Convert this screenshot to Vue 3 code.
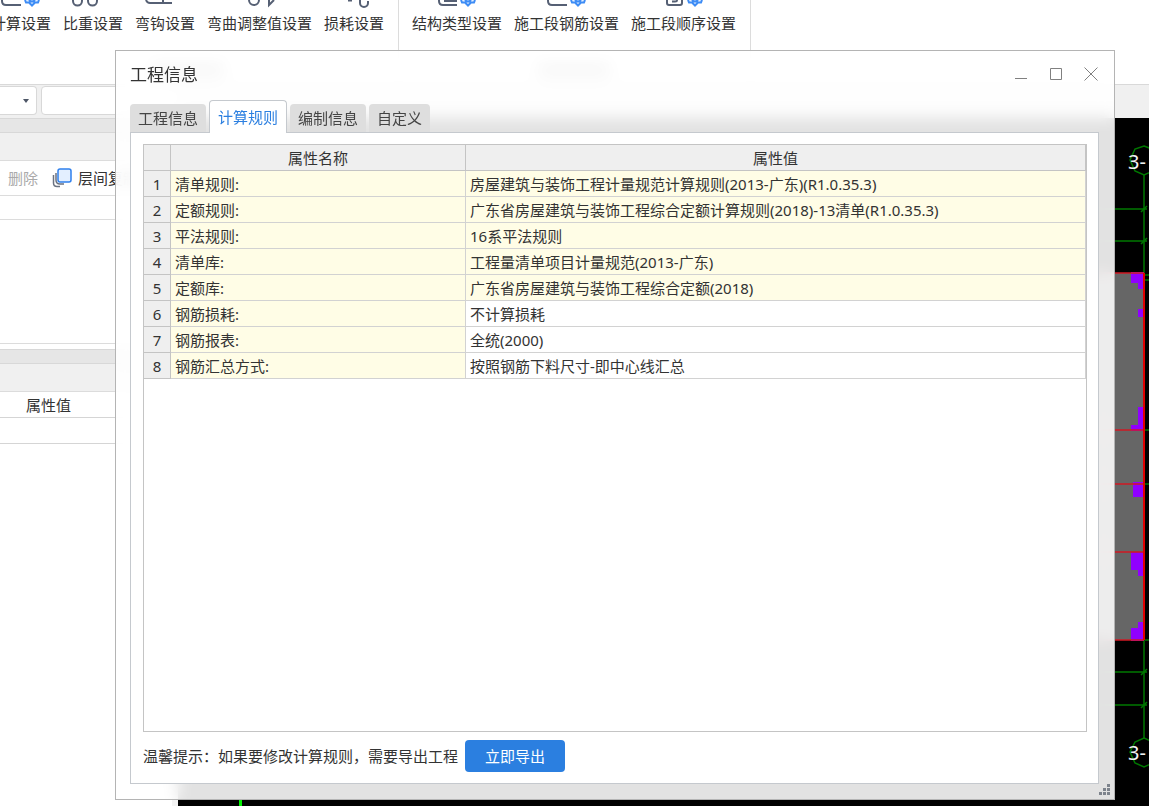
<script setup>
import { ref } from 'vue'

const ribbonGroups = [
  {
    cls: 'rebar',
    items: [
      { label: '计算设置', icon: 'calc' },
      { label: '比重设置', icon: 'weight' },
      { label: '弯钩设置', icon: 'hook' },
      { label: '弯曲调整值设置', icon: 'bend' },
      { label: '损耗设置', icon: 'loss' },
    ],
  },
  {
    cls: 'segment',
    items: [
      { label: '结构类型设置', icon: 'struct' },
      { label: '施工段钢筋设置', icon: 'calc' },
      { label: '施工段顺序设置', icon: 'order' },
    ],
  },
]

const tabs = ['工程信息', '计算规则', '编制信息', '自定义']
const active = ref(1)

const rows = [
  { name: '清单规则:', value: '房屋建筑与装饰工程计量规范计算规则(2013-广东)(R1.0.35.3)', locked: true },
  { name: '定额规则:', value: '广东省房屋建筑与装饰工程综合定额计算规则(2018)-13清单(R1.0.35.3)', locked: true },
  { name: '平法规则:', value: '16系平法规则', locked: true },
  { name: '清单库:', value: '工程量清单项目计量规范(2013-广东)', locked: true },
  { name: '定额库:', value: '广东省房屋建筑与装饰工程综合定额(2018)', locked: true },
  { name: '钢筋损耗:', value: '不计算损耗', locked: false },
  { name: '钢筋报表:', value: '全统(2000)', locked: false },
  { name: '钢筋汇总方式:', value: '按照钢筋下料尺寸-即中心线汇总', locked: false },
]
</script>

<template>
  <div class="app">
    <header class="ribbon">
      <section v-for="g in ribbonGroups" :key="g.cls" class="group" :class="g.cls">
        <div class="tools">
          <button v-for="t in g.items" :key="t.label" type="button" class="tool">
            <svg class="tool-icon" viewBox="0 0 40 10" fill="none" stroke="#566074" stroke-width="2">
              <path v-if="t.icon === 'calc'" d="M1 0V1Q1 5 5 5H20" />
              <path v-else-if="t.icon === 'weight'" d="M0 0V1a4.500 4.500 0 0 0 9 0V0M15 0V1a4.500 4.500 0 0 0 9 0V0" />
              <path v-else-if="t.icon === 'hook'" d="M1 0Q2 3 5 3H27M18 0V3" />
              <path v-else-if="t.icon === 'bend'" d="M9 0a5 5 0 0 0 10 0M29 0V5L34 0" />
              <path v-else-if="t.icon === 'loss'" d="M14 0.500H18M26 0V3a4 4 0 0 0 8 0V1" />
              <path v-else-if="t.icon === 'struct'" d="M2 0V1Q2 5 6 5H20M7 1H20" />
              <path v-else d="M3 0V3Q3 5 5 5H16Q18 5 18 3V0M8 1.500H11Q13 1.500 13 0" />
              <path
                v-if="['calc', 'struct', 'order'].includes(t.icon)"
                d="M24 0L25 2.500H28L31 5.500L34 2.500H37L38 0M28 0Q31 3 34 0"
                stroke="#3d8cf5"
                fill="#e3efff"
              />
            </svg>
            <span>{{ t.label }}</span>
          </button>
        </div>
        <i class="caption-shade"></i>
      </section>
    </header>

    <div class="selectors">
      <button type="button" class="combo" aria-label="楼层"><i class="caret"></i></button>
      <input class="combo-wide" aria-label="构件" />
    </div>

    <div class="work">
      <aside class="side">
        <div class="splitter first"></div>
        <div class="side-title"></div>
        <div class="side-tools">
          <button type="button" class="side-btn disabled">删除</button>
          <button type="button" class="side-btn">
            <svg viewBox="0 0 20 20" width="20" height="20" fill="none">
              <path d="M1.500 7V15Q1.500 18.500 5 18.500H8M4 5V12Q4 16 8 16H12" stroke="#6b7280" stroke-width="1.500" />
              <rect x="6" y="1" width="13" height="13" rx="2" fill="#e3efff" stroke="#2f80ed" stroke-width="1.500" />
            </svg>
            <span>层间复制</span>
          </button>
        </div>
        <div class="side-search"></div>
        <div class="side-list"></div>
        <div class="splitter"></div>
        <div class="side-title"></div>
        <div class="side-head">属性值</div>
        <div class="side-cell"></div>
      </aside>

      <main class="canvas">
        <svg class="drawing" width="100" height="689" viewBox="0 0 100 689" fill="none">
          <rect x="0" y="155" width="95" height="367" fill="#666" />
          <g stroke="#007800" stroke-width="1.500">
            <path d="M0 91H98M0 123H98M0 554H98M0 587H98M95 57V155M95 522V620M96 157H100M96 162H100M96 312H100M96 366H100M96 522H100" />
            <path d="M92 94L98 88M92 126L98 120M92 557L98 551M92 590L98 584" />
            <path d="M95 28L103 31L109 42L104 53L95 57L86 53L81 42L86 31ZM95 620L104 624L109 634L104 645L95 649L86 645L81 634L86 624Z" />
          </g>
          <path
            d="M82 154H95V171H89V165H82ZM89 191H95V199H89ZM89 289H95V313H82V307H89ZM84 364H95V379H84ZM82 434H95V458H89V452H82ZM82 510H89V504H95V523H82Z"
            fill="#9000ff"
          />
          <path d="M0 155H95M0 312H95M0 366H95M0 434H95M0 522H95" stroke="#d01823" stroke-width="1.500" />
          <path d="M95 155V522" stroke="#e00000" stroke-width="2" />
          <g class="axis">
            <text x="79" y="51">3-</text>
            <text x="79" y="642">3-</text>
          </g>
        </svg>
        <i class="marker"></i>
      </main>
    </div>

    <section class="dialog" role="dialog" aria-labelledby="dialog-title">
      <div class="titlebar">
        <h1 id="dialog-title">工程信息</h1>
        <div class="window-controls">
          <button type="button" aria-label="最小化">
            <svg viewBox="0 0 14 14"><path d="M1 11.500H13" /></svg>
          </button>
          <button type="button" aria-label="最大化">
            <svg viewBox="0 0 14 14"><path d="M1.500 1.500H12.500V12.500H1.500Z" /></svg>
          </button>
          <button type="button" aria-label="关闭">
            <svg viewBox="0 0 14 14"><path d="M.5 .5L13.500 13.500M13.500 .5L.5 13.500" /></svg>
          </button>
        </div>
      </div>

      <nav class="tabs" role="tablist">
        <button
          v-for="(t, i) in tabs"
          :key="t"
          type="button"
          role="tab"
          :aria-selected="active === i"
          :class="{ active: active === i }"
          @click="active = i"
        >{{ t }}</button>
      </nav>

      <div class="page">
        <div class="grid-box">
          <table>
            <colgroup><col class="c-no" /><col class="c-name" /><col /></colgroup>
            <thead>
              <tr><th></th><th>属性名称</th><th>属性值</th></tr>
            </thead>
            <tbody>
              <tr v-for="(r, i) in rows" :key="r.name" :class="{ locked: r.locked }">
                <th scope="row">{{ i + 1 }}</th>
                <td class="name">{{ r.name }}</td>
                <td>{{ r.value }}</td>
              </tr>
            </tbody>
          </table>
        </div>
        <div class="footer">
          <span>温馨提示：如果要修改计算规则，需要导出工程</span>
          <button type="button" class="primary">立即导出</button>
        </div>
      </div>

      <svg class="grip" viewBox="0 0 12 12" width="12" height="12" fill="#7d838c">
        <path d="M8 0h3v3H8zM4 4h3v3H4zM8 4h3v3H8zM0 8h3v3H0zM4 8h3v3H4zM8 8h3v3H8z" />
      </svg>
    </section>
  </div>
</template>

<style>
body {
  margin: 0;
  overflow: hidden;
}
</style>

<style scoped>
* {
  box-sizing: border-box;
}
.app {
  position: relative;
  display: flex;
  flex-direction: column;
  height: 100vh;
  overflow: hidden;
  background: #fff;
  color: #333;
  font: 15px/20px "Noto Sans", "Noto Sans CJK SC", sans-serif;
}
button,
input {
  font: inherit;
  color: inherit;
  padding: 0;
  border: 0;
  background: none;
}

.ribbon {
  display: flex;
  flex: none;
  height: 85px;
  border-bottom: 1px solid #d9d9d9;
}
.group {
  display: flex;
  flex-direction: column;
  align-items: center;
  border-right: 1px solid #dcdcdc;
}
.group.rebar {
  padding-right: 14px;
  margin-left: -9px;
}
.group.segment {
  padding: 0 14px 0 13px;
}
.tools {
  display: flex;
  gap: 12px;
}
.tool {
  display: flex;
  flex-direction: column;
  align-items: center;
  white-space: nowrap;
}
.tool-icon {
  width: 40px;
  height: 10px;
  margin-bottom: 3px;
  overflow: visible;
}
.caption-shade {
  width: 72px;
  height: 14px;
  margin-top: 30px;
  background: #b4b4b4;
}

.selectors {
  display: flex;
  flex: none;
  gap: 4px;
  height: 33px;
  padding: 1px 0 3px;
  background: #f0f0f0;
}
.combo {
  display: flex;
  align-items: center;
  justify-content: flex-end;
  width: 37px;
  padding-right: 7px;
  background: #fff;
  border: 1px solid #d8d8d8;
  border-left: 0;
  border-radius: 0 4px 4px 0;
}
.caret {
  border: 3px solid transparent;
  border-top: 4px solid #4d5666;
  border-bottom: 0;
}
.combo-wide {
  width: 140px;
  background: #fff;
  border: 1px solid #d8d8d8;
  border-radius: 4px;
}

.work {
  display: flex;
  flex: 1;
  min-height: 0;
}
.side {
  display: flex;
  flex-direction: column;
  flex: none;
  width: 178px;
  border-right: 6px solid #f3f3f3;
}
.splitter {
  height: 15px;
  background: #e6e6e6;
  border-top: 1px solid #d8d8d8;
  border-bottom: 1px solid #d8d8d8;
}
.side-title {
  height: 28px;
  background: #f0f0f0;
  border-bottom: 1px solid #dcdcdc;
}
.side-tools {
  display: flex;
  gap: 14px;
  align-items: center;
  height: 35px;
  padding-left: 8px;
  border-bottom: 1px solid #dcdcdc;
}
.side-btn {
  display: flex;
  gap: 6px;
  align-items: center;
  white-space: nowrap;
}
.side-btn.disabled {
  color: #aaa;
}
.side-search {
  height: 24px;
  border-bottom: 1px solid #dcdcdc;
}
.side-list {
  height: 124px;
  margin-bottom: 5px;
  border-bottom: 1px solid #dcdcdc;
}
.side-head {
  height: 26px;
  padding-left: 26px;
  line-height: 26px;
  border-bottom: 1px solid #d5d5d5;
}
.side-cell {
  height: 26px;
  border-bottom: 1px solid #d5d5d5;
}

.canvas {
  position: relative;
  display: flex;
  flex: 1;
  justify-content: flex-end;
  background: #000;
}
.drawing {
  flex: none;
}
.axis text {
  font: 20px "Noto Sans", sans-serif;
  fill: #f2f2f2;
}
.marker {
  position: absolute;
  left: 61px;
  bottom: 0;
  width: 3px;
  height: 6px;
  background: #00f000;
}

.dialog {
  position: absolute;
  inset: 50px 34px 6px 115px;
  display: flex;
  flex-direction: column;
  padding: 0 15px 15px 14px;
  background: rgba(255, 255, 255, 0.886);
  border: 1px solid #b4b4b4;
  backdrop-filter: blur(8px);
}
.titlebar {
  display: flex;
  flex: none;
  justify-content: space-between;
  align-items: center;
  height: 48px;
}
h1 {
  margin: 0;
  font-size: 17px;
  font-weight: 400;
}
.window-controls {
  display: flex;
  gap: 21px;
  padding: 0 1px 2px 0;
}
.window-controls button {
  width: 14px;
  height: 14px;
}
.window-controls svg {
  display: block;
  width: 14px;
  height: 14px;
  fill: none;
  stroke: #808080;
}
.tabs {
  display: flex;
  flex: none;
  gap: 3px;
  align-items: flex-end;
  height: 34px;
  margin-bottom: -1px;
  z-index: 1;
}
.tabs button {
  height: 28px;
  padding: 0 8px;
  margin-bottom: 1px;
  color: #444;
  background: #dedede;
  border-radius: 4px 4px 0 0;
}
.tabs .active {
  height: 33px;
  margin-bottom: 0;
  color: #2b7fe0;
  background: #fff;
  border: 1px solid #c5c9ce;
  border-bottom: 0;
}
.page {
  display: flex;
  flex: 1;
  flex-direction: column;
  min-height: 0;
  padding: 11px 11px 11px 12px;
  background: #fff;
  border: 1px solid #c5c9ce;
}
.grid-box {
  flex: 1;
  min-height: 0;
  border: 1px solid #c4c4c4;
}
table {
  width: 100%;
  table-layout: fixed;
  border-collapse: separate;
  border-spacing: 0;
}
.c-no {
  width: 27px;
}
.c-name {
  width: 295px;
}
th,
td {
  height: 26px;
  padding: 0 4px;
  line-height: 20px;
  font-weight: 400;
  text-align: left;
  white-space: nowrap;
  border-right: 1px solid #d2d2d2;
  border-bottom: 1px solid #d2d2d2;
}
th {
  text-align: center;
  background: #efefef;
  border-color: #c4c4c4;
}
.name,
.locked td {
  background: #fffde6;
}
.footer {
  display: flex;
  flex: none;
  gap: 7px;
  align-items: center;
  padding-top: 8px;
}
.primary {
  width: 100px;
  height: 32px;
  color: #fff;
  background: #2b7fe0;
  border-radius: 4px;
}
.grip {
  position: absolute;
  right: 3px;
  bottom: 3px;
}
</style>
